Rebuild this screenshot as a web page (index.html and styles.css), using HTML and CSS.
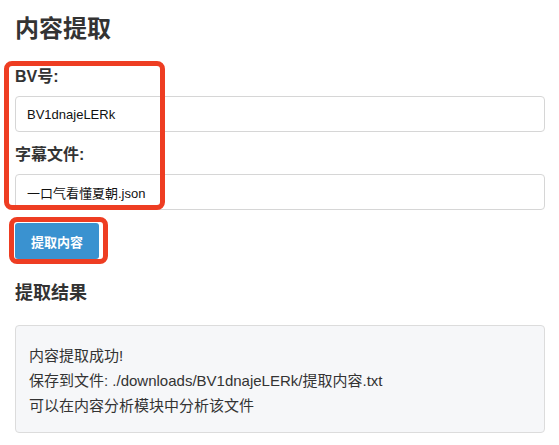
FILE: index.html
```html
<!DOCTYPE html>
<html lang="zh-CN">
<head>
  <meta charset="UTF-8">
  <meta name="viewport" content="width=device-width, initial-scale=1.0">
  <title>内容提取</title>
  <link rel="stylesheet" href="styles.css">
</head>
<body>

  <div class="page">
    <h1>内容提取</h1>

    <form class="extract-form">
      <div class="mark mark-fields"></div>
      <div class="mark mark-button"></div>

      <label for="bvid">BV号:</label>
      <input type="text" id="bvid" value="BV1dnajeLERk">

      <label for="subtitle" class="second">字幕文件:</label>
      <input type="text" id="subtitle" value="一口气看懂夏朝.json">

      <button type="button" class="submit-button">提取内容</button>
    </form>

    <h2>提取结果</h2>
    <div class="result">
      内容提取成功!<br>
      保存到文件: ./downloads/BV1dnajeLERk/提取内容.txt<br>
      可以在内容分析模块中分析该文件
    </div>
  </div>

</body>
</html>
```

FILE: styles.css
```css
body {
  font-family: "Liberation Sans", "Noto Sans CJK SC", sans-serif;
  margin: 0;
  padding: 0;
  background-color: #fff;
  color: #333;
}

.page {
  padding: 0 14px 0 15px;
}

h1 {
  font-size: 24px;
  line-height: 30px;
  margin: 14px 0 23px;
  color: #333;
}

.extract-form {
  position: relative;
}

.extract-form label {
  display: block;
  font-size: 16px;
  line-height: 20px;
  font-weight: bold;
  margin-bottom: 9px;
}

.extract-form label.second {
  margin-top: 13px;
}

.extract-form input {
  display: block;
  width: 100%;
  box-sizing: border-box;
  height: 36px;
  padding: 0 11px;
  border: 1px solid #d6d6d6;
  border-radius: 4px;
  font-family: inherit;
  font-size: 13px;
  color: #111;
  background: #fff;
}

.submit-button {
  margin-top: 13px;
  height: 36px;
  padding: 0 16px;
  border: none;
  border-radius: 3px;
  background-color: #3a92d0;
  color: #fff;
  font-family: inherit;
  font-size: 13px;
  font-weight: bold;
  cursor: pointer;
}

/* red annotation boxes */
.mark {
  position: absolute;
  border: 5px solid #ee3d22;
  border-radius: 8px;
  pointer-events: none;
}

.mark-fields {
  left: -11px;
  top: -6px;
  width: 151px;
  height: 139px;
}

.mark-button {
  left: -6px;
  top: 150px;
  width: 89px;
  height: 37px;
}

h2 {
  font-size: 18px;
  line-height: 22px;
  margin: 23px 0 21px;
  color: #333;
}

.result {
  background-color: #f6f7f9;
  border: 1px solid #dcdcdc;
  border-radius: 4px;
  padding: 17px 15px 14px 13px;
  font-size: 15px;
  line-height: 25px;
  color: #333;
}
```
